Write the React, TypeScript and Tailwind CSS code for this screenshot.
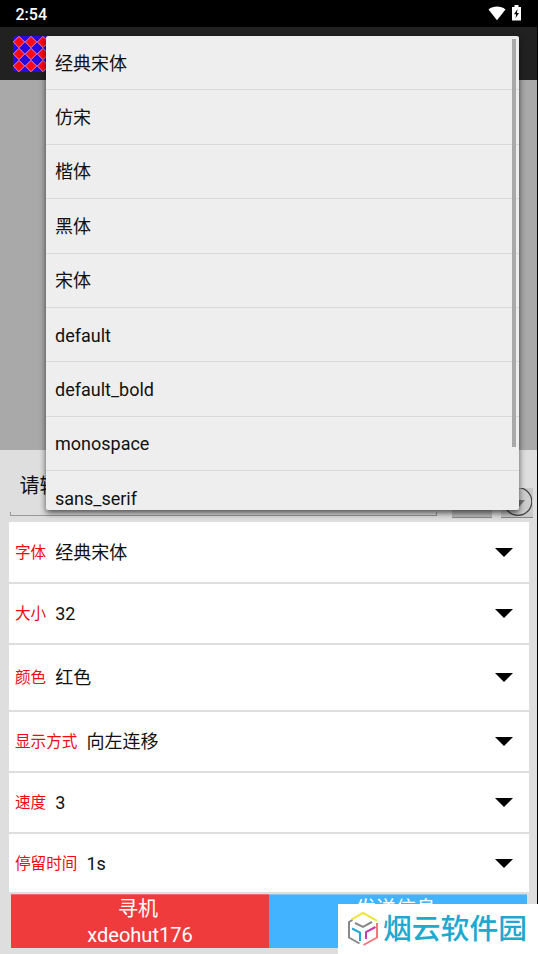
import { useState } from "react"
import clsx from "clsx"

const FONTS = ["经典宋体", "仿宋", "楷体", "黑体", "宋体", "default", "default_bold", "monospace", "sans_serif"]

const SETTINGS = [
  { label: "字体", value: "经典宋体", height: "h-[60px]" },
  { label: "大小", value: "32", height: "h-[59px]" },
  { label: "颜色", value: "红色", height: "h-[65px]" },
  { label: "显示方式", value: "向左连移", height: "h-[59px]" },
  { label: "速度", value: "3", height: "h-[59px]" },
  { label: "停留时间", value: "1s", height: "h-[58px]" },
]

function StatusBar() {
  return (
    <div className="flex h-[27px] shrink-0 items-center bg-black pl-[15.500px] pr-4 text-white">
      <span className="flex-1 pt-[2px] text-[16px] font-medium leading-none">2:54</span>
      <svg width="18" height="15" viewBox="0 0 18 15" className="mr-[6px]" fill="#fff">
        <path d="M.5 3.4C5.500 -.4 12.500 -.4 17.500 3.400L9 14.200Z" />
      </svg>
      <svg width="9" height="16" viewBox="0 0 9 16" className="-mt-[2px]">
        <path d="M2.500 0h4v2H9v13.500H0V2h2.500z" fill="#fff" />
        <path d="M5.600 4L2 9.300h2.200L3.500 13.300 7 8H4.900z" fill="#000" />
      </svg>
    </div>
  )
}

function AppIcon() {
  return (
    <svg width="36" height="36" viewBox="0 0 36 36">
      <defs>
        <pattern id="diamonds" width="12" height="12" patternUnits="userSpaceOnUse">
          <rect width="12" height="12" fill="#2a08e0" />
          <path d="M6 0.300L11.700 6 6 11.700 0.300 6z" fill="#ff0a12" stroke="#e8a8d8" strokeWidth=".8" />
        </pattern>
      </defs>
      <rect width="36" height="36" rx="4" fill="url(#diamonds)" />
    </svg>
  )
}

function MessageInput() {
  return (
    <div className="flex h-[72px] shrink-0 items-end pb-1 pl-[10px] pr-1">
      <div className="mb-[2px] flex h-[60px] w-[428px] flex-col">
        <span className="flex-1 pl-[9.500px] pt-[15px] text-[20px] leading-[30px]">请输入信息</span>
        <div className="h-1 border border-t-0 border-[#999]" />
      </div>
      <div className="ml-[15px] h-[30px] w-10 border-b border-[#888] bg-[#bbb]" />
      <div className="ml-[9px] flex h-[30px] w-8 items-center justify-center border-b border-[#888] bg-[#c9c9c9]">
        <svg width="30" height="30" viewBox="0 0 30 30" className="shrink-0">
          <circle cx="16" cy="13.500" r="13.800" fill="#cdcdcd" stroke="#454545" strokeWidth="1.300" />
          <path d="M11 12h12l-6 7z" fill="#777" />
        </svg>
      </div>
    </div>
  )
}

function FontMenu({ onSelect }: { onSelect: (font: string) => void }) {
  return (
    <div className="absolute left-[46px] top-9 h-[474px] w-[473px] overflow-hidden rounded-[2px] bg-[#eee] shadow-[0_3px_6px_0px_rgba(0,0,0,0.65)]">
      {FONTS.map((font) => (
        <button
          key={font}
          onClick={() => onSelect(font)}
          className="flex h-[54.4px] w-full items-center border-b border-[#d9d9d9] pl-[9px] pt-px text-left text-[18px]"
        >
          {font}
        </button>
      ))}
      <div className="absolute right-[3px] top-[3px] h-[408px] w-1 bg-[#a9a9a9]" />
    </div>
  )
}

function Watermark() {
  return (
    <div className="absolute bottom-0 right-0 flex h-[50px] w-[200px] items-center bg-white pl-[9px]">
      <svg width="32" height="36" viewBox="0 0 32 36" fill="none" strokeWidth="2">
        <path d="M4.500 8.500L16 2 30 9.800" stroke="#efe52e" />
        <path d="M8 12l8 3.800 9-4.800" stroke="#888" />
        <path d="M12.500 32.500L2 26.500V11l3.500-2" stroke="#888" />
        <path d="M5 17.500l8 4.200V30" stroke="#22a9cf" />
        <path d="M19 28v-7l9.500-5" stroke="#c13ea9" />
        <path d="M30 12v14.500L16.500 34" stroke="#f0787c" />
      </svg>
      <span className="ml-1 text-[28.800px] font-medium leading-none text-[#20a9cf]">烟云软件园</span>
    </div>
  )
}

export default function App() {
  const [font, setFont] = useState("经典宋体")
  const [menuOpen, setMenuOpen] = useState(true)

  const selectFont = (name: string) => {
    setFont(name)
    setMenuOpen(false)
  }

  return (
    <div className="relative h-[954px] w-[538px] overflow-hidden bg-black font-['Roboto','Noto_Sans_CJK_SC',sans-serif] text-[#111]">
      <div className="flex h-full w-[537px] flex-col bg-[#dedede]">
        <StatusBar />
        <div className="flex h-[53px] shrink-0 items-center bg-[#212121] pl-[13px]">
          <AppIcon />
        </div>
        <div className="h-[370px] shrink-0 bg-[#a9a9a9]" />
        <MessageInput />

        <div className="ml-[9px] flex w-[520px] flex-col gap-[2px]">
          {SETTINGS.map((item) => (
            <div key={item.label} className={clsx("flex items-center bg-white pl-[6px] pr-4", item.height)}>
              <span className="pt-[3px] text-[15.600px] text-[#f00a14]">{item.label}</span>
              <button
                className="ml-[9px] flex flex-1 items-center justify-between text-[18px]"
                onClick={() => item.label === "字体" && setMenuOpen(!menuOpen)}
              >
                {item.label === "字体" ? font : item.value}
                <svg width="18" height="9" viewBox="0 0 18 9">
                  <path d="M0 0h18L9 9z" fill="#000" />
                </svg>
              </button>
            </div>
          ))}
        </div>

        <div className="ml-[11px] mt-[2px] flex h-[54px] w-[516px] text-center text-[20px] leading-[26px] text-white">
          <button className="flex flex-1 flex-col items-center border-t border-[#f46a6c] bg-[#f03b3d] pt-px">
            <span className="pr-1">寻机</span>
            <span>xdeohut176</span>
          </button>
          <button className="flex flex-1 flex-col items-center border-t border-[#7cc6f8] bg-[#42b3ff] pt-px">
            <span className="pr-1">发送信息</span>
          </button>
        </div>
      </div>

      {menuOpen && <FontMenu onSelect={selectFont} />}
      <Watermark />
    </div>
  )
}
